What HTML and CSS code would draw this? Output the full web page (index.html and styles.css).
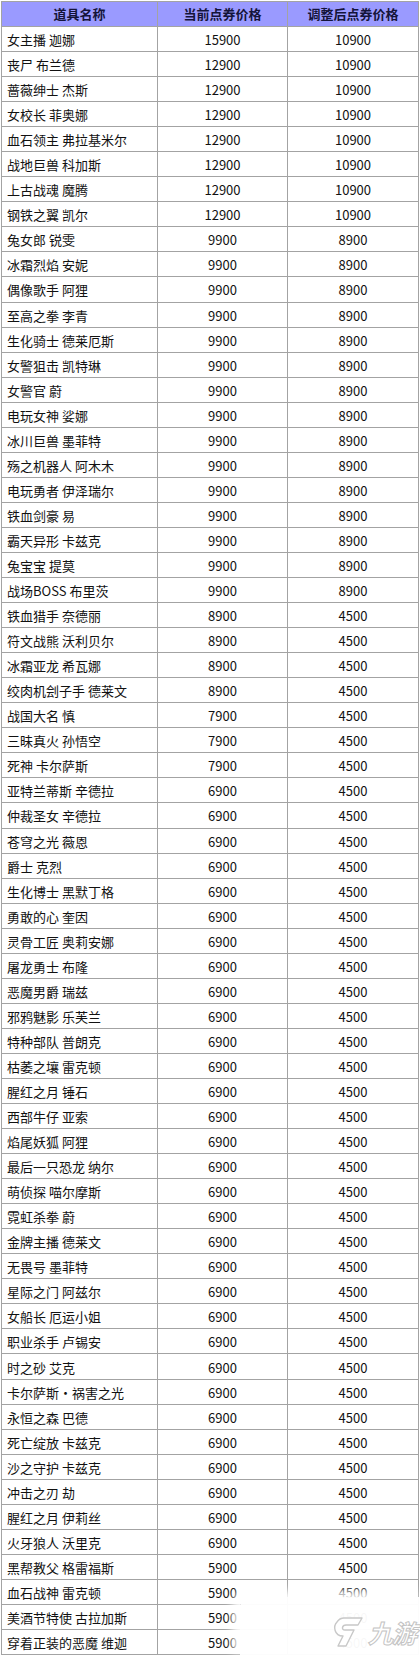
FILE: index.html
```html
<!DOCTYPE html>
<html lang="zh-CN">
<head>
<meta charset="utf-8">
<title>道具价格调整</title>
<link rel="stylesheet" href="styles.css">
</head>
<body>
<div class="wrap">
<table class="price">
<thead>
<tr><th>道具名称</th><th>当前点券价格</th><th>调整后点券价格</th></tr>
</thead>
<tbody>
<tr><td>女主播 迦娜</td><td>15900</td><td>10900</td></tr>
<tr><td>丧尸 布兰德</td><td>12900</td><td>10900</td></tr>
<tr><td>蔷薇绅士 杰斯</td><td>12900</td><td>10900</td></tr>
<tr><td>女校长 菲奥娜</td><td>12900</td><td>10900</td></tr>
<tr><td>血石领主 弗拉基米尔</td><td>12900</td><td>10900</td></tr>
<tr><td>战地巨兽 科加斯</td><td>12900</td><td>10900</td></tr>
<tr><td>上古战魂 魔腾</td><td>12900</td><td>10900</td></tr>
<tr><td>钢铁之翼 凯尔</td><td>12900</td><td>10900</td></tr>
<tr><td>兔女郎 锐雯</td><td>9900</td><td>8900</td></tr>
<tr><td>冰霜烈焰 安妮</td><td>9900</td><td>8900</td></tr>
<tr><td>偶像歌手 阿狸</td><td>9900</td><td>8900</td></tr>
<tr><td>至高之拳 李青</td><td>9900</td><td>8900</td></tr>
<tr><td>生化骑士 德莱厄斯</td><td>9900</td><td>8900</td></tr>
<tr><td>女警狙击 凯特琳</td><td>9900</td><td>8900</td></tr>
<tr><td>女警官 蔚</td><td>9900</td><td>8900</td></tr>
<tr><td>电玩女神 娑娜</td><td>9900</td><td>8900</td></tr>
<tr><td>冰川巨兽 墨菲特</td><td>9900</td><td>8900</td></tr>
<tr><td>殇之机器人 阿木木</td><td>9900</td><td>8900</td></tr>
<tr><td>电玩勇者 伊泽瑞尔</td><td>9900</td><td>8900</td></tr>
<tr><td>铁血剑豪 易</td><td>9900</td><td>8900</td></tr>
<tr><td>霸天异形 卡兹克</td><td>9900</td><td>8900</td></tr>
<tr><td>兔宝宝 提莫</td><td>9900</td><td>8900</td></tr>
<tr><td>战场BOSS 布里茨</td><td>9900</td><td>8900</td></tr>
<tr><td>铁血猎手 奈德丽</td><td>8900</td><td>4500</td></tr>
<tr><td>符文战熊 沃利贝尔</td><td>8900</td><td>4500</td></tr>
<tr><td>冰霜亚龙 希瓦娜</td><td>8900</td><td>4500</td></tr>
<tr><td>绞肉机刽子手 德莱文</td><td>8900</td><td>4500</td></tr>
<tr><td>战国大名 慎</td><td>7900</td><td>4500</td></tr>
<tr><td>三昧真火 孙悟空</td><td>7900</td><td>4500</td></tr>
<tr><td>死神 卡尔萨斯</td><td>7900</td><td>4500</td></tr>
<tr><td>亚特兰蒂斯 辛德拉</td><td>6900</td><td>4500</td></tr>
<tr><td>仲裁圣女 辛德拉</td><td>6900</td><td>4500</td></tr>
<tr><td>苍穹之光 薇恩</td><td>6900</td><td>4500</td></tr>
<tr><td>爵士 克烈</td><td>6900</td><td>4500</td></tr>
<tr><td>生化博士 黑默丁格</td><td>6900</td><td>4500</td></tr>
<tr><td>勇敢的心 奎因</td><td>6900</td><td>4500</td></tr>
<tr><td>灵骨工匠 奥莉安娜</td><td>6900</td><td>4500</td></tr>
<tr><td>屠龙勇士 布隆</td><td>6900</td><td>4500</td></tr>
<tr><td>恶魔男爵 瑞兹</td><td>6900</td><td>4500</td></tr>
<tr><td>邪鸦魅影 乐芙兰</td><td>6900</td><td>4500</td></tr>
<tr><td>特种部队 普朗克</td><td>6900</td><td>4500</td></tr>
<tr><td>枯萎之壤 雷克顿</td><td>6900</td><td>4500</td></tr>
<tr><td>腥红之月 锤石</td><td>6900</td><td>4500</td></tr>
<tr><td>西部牛仔 亚索</td><td>6900</td><td>4500</td></tr>
<tr><td>焰尾妖狐 阿狸</td><td>6900</td><td>4500</td></tr>
<tr><td>最后一只恐龙 纳尔</td><td>6900</td><td>4500</td></tr>
<tr><td>萌侦探 喵尔摩斯</td><td>6900</td><td>4500</td></tr>
<tr><td>霓虹杀拳 蔚</td><td>6900</td><td>4500</td></tr>
<tr><td>金牌主播 德莱文</td><td>6900</td><td>4500</td></tr>
<tr><td>无畏号 墨菲特</td><td>6900</td><td>4500</td></tr>
<tr><td>星际之门 阿兹尔</td><td>6900</td><td>4500</td></tr>
<tr><td>女船长 厄运小姐</td><td>6900</td><td>4500</td></tr>
<tr><td>职业杀手 卢锡安</td><td>6900</td><td>4500</td></tr>
<tr><td>时之砂 艾克</td><td>6900</td><td>4500</td></tr>
<tr><td>卡尔萨斯·祸害之光</td><td>6900</td><td>4500</td></tr>
<tr><td>永恒之森 巴德</td><td>6900</td><td>4500</td></tr>
<tr><td>死亡绽放 卡兹克</td><td>6900</td><td>4500</td></tr>
<tr><td>沙之守护 卡兹克</td><td>6900</td><td>4500</td></tr>
<tr><td>冲击之刃 劫</td><td>6900</td><td>4500</td></tr>
<tr><td>腥红之月 伊莉丝</td><td>6900</td><td>4500</td></tr>
<tr><td>火牙狼人 沃里克</td><td>6900</td><td>4500</td></tr>
<tr><td>黑帮教父 格雷福斯</td><td>5900</td><td>4500</td></tr>
<tr><td>血石战神 雷克顿</td><td>5900</td><td>4500</td></tr>
<tr><td>美酒节特使 古拉加斯</td><td>5900</td><td>4500</td></tr>
<tr><td>穿着正装的恶魔 维迦</td><td>5900</td><td>4500</td></tr>
</tbody>
</table>
<div class="watermark">
<svg class="wm-logo" width="34" height="32" viewBox="0 0 34 32">
<path d="M12 2 L30 2 L26 9 L14 9 C10 9 9 14 13 14 L22 14 L14 30 L6 30 L11 20 C2 20 1 10 5 6 C7 3 9 2 12 2 Z" fill="#fff" stroke="#c8c8c8" stroke-width="1.4" stroke-linejoin="round"/>
</svg>
<span class="wm-text">九游</span>
</div>
</div>
</body>
</html>
```

FILE: styles.css
```css
html, body {
  margin: 0;
  padding: 0;
  background: #fff;
}
.wrap {
  position: relative;
  padding: 1px 1px 0 1px;
  width: 418px;
}
.price {
  border-collapse: collapse;
  width: 418px;
  table-layout: fixed;
  font-family: "Noto Sans CJK SC", "Microsoft YaHei", sans-serif;
  font-size: 13px;
  color: #111;
}
.price th, .price td {
  border: 1px solid #a3a3a3;
  padding: 0;
  line-height: 16px;
}
.price th:nth-child(1) { width: 155px; }
.price th:nth-child(2) { width: 129px; }
.price thead tr { height: 25px; }
.price th {
  background: #9a9aff;
  font-weight: bold;
  color: #14143a;
  text-align: center;
}
.price tbody tr { height: 25.05px; }
.price td {
  text-align: center;
  padding-top: 2px;
}
.price td:first-child {
  text-align: left;
  padding-left: 5px;
}
.watermark {
  position: absolute;
  right: 0;
  bottom: 0;
  width: 176px;
  height: 58px;
  background: rgba(255,255,255,0.97);
  box-shadow: -6px -4px 8px 2px rgba(255,255,255,0.9);
  border-top-left-radius: 10px;
  display: flex;
  align-items: center;
  justify-content: flex-end;
  padding-right: 4px;
  gap: 2px;
}
.wm-logo {
  margin-top: 12px;
}
.wm-text {
  margin-top: 12px;
  font-family: "Noto Sans CJK SC", sans-serif;
  font-size: 25px;
  font-weight: bold;
  font-style: italic;
  color: #fff;
  -webkit-text-stroke: 1px #c4c4c4;
  letter-spacing: -1px;
}
```
